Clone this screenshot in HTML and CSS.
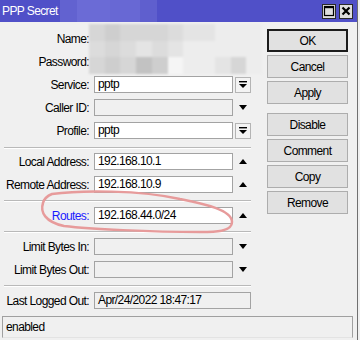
FILE: index.html
```html
<!DOCTYPE html>
<html lang="en">
<head>
  <meta charset="UTF-8">
  <meta name="viewport" content="width=device-width, initial-scale=1.0">
  <title>PPP Secret</title>
  <link rel="stylesheet" href="styles.css">
</head>
<body>
  <div class="window">
    <div class="titlebar">
      <span class="title">PPP Secret</span>
      <span class="title-blur"><i class="b1"></i><i class="b2"></i><i class="b3"></i><i class="b4"></i></span>
      <span class="title-btns">
        <span class="tbtn">
          <svg width="12" height="12" viewBox="0 0 12 12"><rect x="1.5" y="1.5" width="9" height="9" fill="none" stroke="#000" stroke-width="1.2"/><rect x="1" y="1" width="10" height="2.2" fill="#000"/></svg>
        </span>
        <span class="tbtn">
          <svg width="12" height="12" viewBox="0 0 12 12"><path d="M2.5 2.5 L9.5 9.5 M9.5 2.5 L2.5 9.5" stroke="#000" stroke-width="2.2"/></svg>
        </span>
      </span>
    </div>

    <div class="main">
      <div class="form">
        <div class="section first">
          <div class="row"><span class="lbl">Name:</span><span class="field"></span></div>
          <div class="row"><span class="lbl">Password:</span><span class="field"></span></div>
          <div class="mosaic">
            <i class="b"></i><i class="a"></i><i class="b"></i><i class="b"></i><i class="b"></i><i class="c"></i><i class="d"></i><i class="d"></i><i class="e"></i><i class="e"></i><i class="e"></i>
            <i class="c"></i><i class="b"></i><i class="c"></i><i class="d"></i><i class="c"></i><i class="d"></i><i class="e"></i><i class="e"></i><i class="e"></i><i class="e"></i><i class="e"></i>
            <i class="b"></i><i class="a"></i><i class="b"></i><i class="g"></i><i class="a"></i><i class="f"></i><i class="e"></i><i class="e"></i><i class="d"></i><i class="b"></i><i class="e"></i>
          </div>
          <div class="row">
            <span class="lbl">Service:</span><span class="field">pptp</span>
            <span class="drop"><svg width="14" height="14" viewBox="0 0 14 14"><rect x="3" y="3" width="8" height="1.4" fill="#000"/><polygon points="3,6 11,6 7,10" fill="#000"/></svg></span>
          </div>
          <div class="row">
            <span class="lbl">Caller ID:</span><span class="field off"></span>
            <span class="arrow"><i class="tri down"></i></span>
          </div>
          <div class="row">
            <span class="lbl">Profile:</span><span class="field">pptp</span>
            <span class="drop"><svg width="14" height="14" viewBox="0 0 14 14"><rect x="3" y="3" width="8" height="1.4" fill="#000"/><polygon points="3,6 11,6 7,10" fill="#000"/></svg></span>
          </div>
        </div>

        <div class="section second">
          <div class="row">
            <span class="lbl">Local Address:</span><span class="field">192.168.10.1</span>
            <span class="arrow"><i class="tri up"></i></span>
          </div>
          <div class="row">
            <span class="lbl">Remote Address:</span><span class="field">192.168.10.9</span>
            <span class="arrow"><i class="tri up"></i></span>
          </div>
        </div>

        <div class="section">
          <div class="row">
            <span class="lbl link">Routes:</span><span class="field">192.168.44.0/24</span>
            <span class="arrow"><i class="tri up"></i></span>
          </div>
        </div>

        <div class="section">
          <div class="row">
            <span class="lbl">Limit Bytes In:</span><span class="field off"></span>
            <span class="arrow"><i class="tri down"></i></span>
          </div>
          <div class="row">
            <span class="lbl">Limit Bytes Out:</span><span class="field off"></span>
            <span class="arrow"><i class="tri down"></i></span>
          </div>
        </div>

        <div class="section">
          <div class="row">
            <span class="lbl">Last Logged Out:</span><span class="field off wide">Apr/24/2022 18:47:17</span>
          </div>
        </div>
      </div>

      <div class="actions">
        <button class="btn default">OK</button>
        <button class="btn">Cancel</button>
        <button class="btn">Apply</button>
        <button class="btn spaced">Disable</button>
        <button class="btn">Comment</button>
        <button class="btn">Copy</button>
        <button class="btn">Remove</button>
      </div>
    </div>

    <div class="status">enabled</div>

    <!-- hand-drawn highlight around Routes -->
    <svg class="mark" width="360" height="340" viewBox="0 0 360 340">
      <path d="M52 194 C 80 190, 140 190, 180 199 C 205 204, 232 210, 232 222 C 232 232, 215 232, 200 232 C 150 232, 90 229, 64 226 C 45 222, 40 212, 43 203 C 44 199, 47 196, 52 194" fill="none" stroke="#e79b9b" stroke-width="2.5" stroke-linecap="round"/>
    </svg>
  </div>
</body>
</html>
```

FILE: styles.css
```css
body {
  margin: 0;
  background: #f0f0f0;
  font-family: "Liberation Sans", Arial, sans-serif;
  font-size: 12px;
  letter-spacing: -0.6px;
  color: #000;
}
.window {
  position: relative;
  width: 357px;
  height: 340px;
  background: #f0f0f0;
  border-right: 1px solid #707070;
}
.titlebar {
  height: 22px;
  background: #5050c8;
  display: flex;
  align-items: center;
  color: #fff;
  font-size: 12px;
}
.title {
  flex: none;
  width: 58px;
  padding-left: 2px;
  box-sizing: border-box;
  white-space: nowrap;
}
.title-blur {
  display: flex;
  height: 22px;
  margin-left: 2px;
}
.title-blur i {
  display: block;
  height: 22px;
}
.title-blur .b1 { width: 17px; background: #6262d0; }
.title-blur .b2 { width: 33px; background: #6b6bd6; }
.title-blur .b3 { width: 30px; background: #6868d4; }
.title-blur .b4 { width: 17px; background: #5f5fce; }
.title-btns {
  margin-left: auto;
  margin-right: 4px;
  display: flex;
  gap: 3px;
}
.tbtn {
  width: 14px;
  height: 15px;
  box-sizing: border-box;
  border: 1px solid #2a2a2a;
  background: #dedede;
  display: flex;
  align-items: center;
  justify-content: center;
}
.main {
  display: flex;
  height: 294px;
}
.form {
  width: 251px;
  padding-left: 4px;
  box-sizing: border-box;
}
.section {
  display: flex;
  flex-direction: column;
  gap: 6px;
  padding: 6px 0 7px;
  border-top: 1px solid #b9b9b9;
  box-shadow: inset 0 1px 0 #fff;
}
.section.first {
  position: relative;
  padding: 8px 0 8px;
  border-top: none;
  box-shadow: none;
}
.section.second {
  padding-top: 5px;
}
.row {
  display: flex;
  align-items: center;
  height: 17px;
}
.lbl {
  width: 85px;
  text-align: right;
  margin-right: 5px;
  white-space: nowrap;
}
.lbl.link {
  color: #1a1aff;
}
.field {
  width: 139px;
  height: 17px;
  box-sizing: border-box;
  border: 1px solid #a3a3a3;
  background: #fff;
  padding-left: 3px;
  line-height: 15px;
  white-space: nowrap;
  overflow: hidden;
}
.field.off {
  background: #f0f0f0;
}
.field.wide {
  width: 157px;
}
.drop {
  width: 16px;
  height: 16px;
  margin-left: 2px;
  box-sizing: border-box;
  border: 1px solid #b4b4b4;
  background: #f3f3f3;
  display: flex;
  align-items: center;
  justify-content: center;
}
.arrow {
  width: 16px;
  margin-left: 2px;
  display: flex;
  justify-content: center;
}
.tri {
  width: 0;
  height: 0;
  border-left: 4.5px solid transparent;
  border-right: 4.5px solid transparent;
}
.tri.down {
  border-top: 5px solid #000;
}
.tri.up {
  border-bottom: 5px solid #000;
}
.mosaic {
  position: absolute;
  left: 85px;
  top: 2px;
  width: 173px;
  height: 50px;
  display: grid;
  grid-template-columns: repeat(11, 1fr);
  grid-template-rows: repeat(3, 1fr);
  filter: blur(1.2px);
}
.mosaic i { display: block; }
.mosaic .a { background: #cecece; }
.mosaic .b { background: #d6d6d6; }
.mosaic .c { background: #dcdcdc; }
.mosaic .d { background: #e4e4e4; }
.mosaic .e { background: #ededed; }
.mosaic .f { background: #f5f5f5; }
.mosaic .g { background: #c2c2c2; }
.actions {
  margin-left: 16px;
  padding-top: 7px;
  display: flex;
  flex-direction: column;
  gap: 3px;
}
.btn {
  width: 81px;
  height: 23px;
  box-sizing: border-box;
  border: 1px solid #adadad;
  background: #e1e1e1;
  font-family: inherit;
  font-size: 12px;
  letter-spacing: -0.6px;
  color: #000;
  padding: 0;
}
.btn.default {
  border: 2px solid #1c1c1c;
}
.btn.spaced {
  margin-top: 6px;
}
.status {
  margin: 0 4px 0 2px;
  height: 22px;
  box-sizing: border-box;
  border: 1px solid #a0a0a0;
  border-bottom-color: #e3e3e3;
  padding-left: 3px;
  line-height: 20px;
}
.mark {
  position: absolute;
  left: 0;
  top: 0;
  pointer-events: none;
}
```
